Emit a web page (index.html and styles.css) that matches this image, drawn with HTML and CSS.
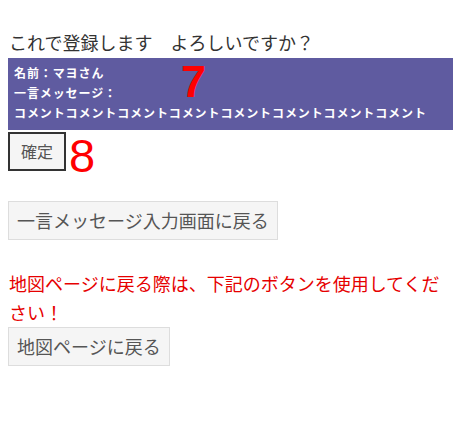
FILE: index.html
```html
<!DOCTYPE html>
<html lang="ja">
<head>
    <meta charset="UTF-8">
    <meta name="viewport" content="width=device-width, initial-scale=1.0">
    <title>確認画面</title>
    <link rel="stylesheet" href="styles.css">
</head>
<body>
    <div id="container">
        <p class="titulo">これで登録します　よろしいですか？</p>
        <div class="confirmBox">
            <p>名前：マヨさん</p>
            <p>一言メッセージ：</p>
            <p>コメントコメントコメントコメントコメントコメントコメントコメント</p>
            <span class="marca7">7</span>
        </div>
        <div class="linhaConfirmar">
            <button class="confirmar">確定</button>
            <span class="marca8">8</span>
        </div>
        <button class="botao voltar">一言メッセージ入力画面に戻る</button>
        <p class="aviso">地図ページに戻る際は、下記のボタンを使用してください！</p>
        <button class="botao">地図ページに戻る</button>
    </div>
</body>
</html>
```

FILE: styles.css
```css
body {
    font-family: "Noto Sans CJK JP", "Noto Sans", sans-serif;
    background-color: #fff;
    color: #333;
    margin: 8px;
}

#container {
    width: 445px;
}

.titulo {
    font-size: 18px;
    line-height: 28px;
    margin: 20px 0 2px 0;
    padding-left: 1px;
}

.confirmBox {
    position: relative;
    background-color: #5f5ba0;
    color: #fff;
    padding: 5px 6px 7px 6px;
}

.confirmBox p {
    margin: 0;
    font-size: 12px;
    font-weight: bold;
    line-height: 20px;
    letter-spacing: 0.9px;
}

.marca7 {
    position: absolute;
    left: 173px;
    top: 1px;
    font-family: "Liberation Sans", Arial, sans-serif;
    font-weight: bold;
    color: #f00;
    font-size: 45px;
    line-height: 45px;
}

.linhaConfirmar {
    display: flex;
    align-items: flex-start;
    margin-top: 2px;
}

.confirmar {
    font-family: "Noto Sans CJK JP", sans-serif;
    font-size: 16px;
    line-height: 23px;
    padding: 6px 11px;
    color: #555;
    background-color: #f5f5f5;
    border: 2px solid #333;
    border-radius: 0;
}

.marca8 {
    font-family: "Liberation Sans", Arial, sans-serif;
    color: #f00;
    font-size: 47px;
    line-height: 39px;
    margin-top: 4px;
    margin-left: 3px;
}

.botao {
    display: block;
    font-family: "Noto Sans CJK JP", sans-serif;
    font-size: 18px;
    line-height: 27px;
    padding: 5px 8px;
    color: #555;
    background-color: #f5f5f5;
    border: 1px solid #ddd;
    border-radius: 0;
}

.voltar {
    margin-top: 26px;
}

.aviso {
    color: #e60000;
    font-size: 18px;
    line-height: 29px;
    margin: 29px 0 0 0;
    padding-left: 1px;
}
```
